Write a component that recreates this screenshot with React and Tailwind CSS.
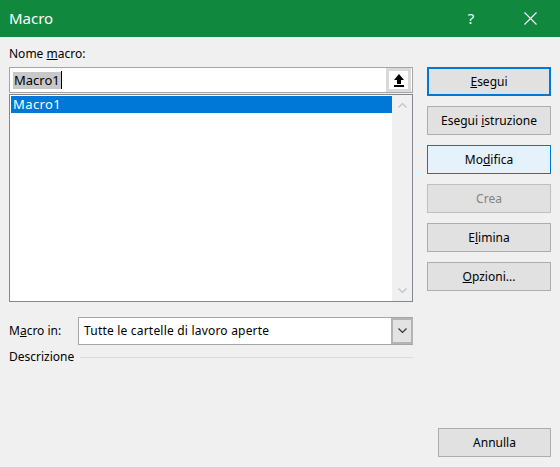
import React from 'react'

const font = { fontFamily: '"Segoe UI", "Noto Sans", "Open Sans", sans-serif' }

function Btn({ children, variant }) {
  let cls = 'h-[29px] w-full flex items-center justify-center text-[12px] border bg-[#e1e1e1] border-[#adadad] text-black'
  if (variant === 'default') cls = 'h-[29px] w-full flex items-center justify-center text-[12px] border-2 bg-[#e1e1e1] border-[#0078d7] text-black'
  if (variant === 'hover') cls = 'h-[29px] w-full flex items-center justify-center text-[12px] border bg-[#e5f1fb] border-[#0078d7] text-black'
  if (variant === 'disabled') cls = 'h-[29px] w-full flex items-center justify-center text-[12px] border bg-[#e1e1e1] border-[#bfbfbf] text-[#838383]'
  return (
    <div className={cls}>
      <span>{children}</span>
    </div>
  )
}

function Chevron({ up, color }) {
  return (
    <svg width="9" height="6" viewBox="0 0 9 6">
      <path d={up ? 'M0.5 5.5 L4.5 1.5 L8.5 5.5' : 'M0.5 0.5 L4.5 4.5 L8.5 0.5'} fill="none" stroke={color} strokeWidth="1.2" />
    </svg>
  )
}

export default function App() {
  return (
    <div className="w-[560px] h-[467px] bg-[#f0f0f0] flex flex-col overflow-hidden" style={font}>
      {/* title bar */}
      <div className="h-[37px] bg-[#10893e] flex items-center pl-[9px] text-white shrink-0">
        <span className="text-[15px]">Macro</span>
        <span className="ml-auto text-[15px] w-[10px] text-center">?</span>
        <div className="ml-[48px] mr-[23px] flex items-center">
          <svg width="13" height="13" viewBox="0 0 13 13">
            <path d="M0.5 0.5 L12.5 12.5 M12.5 0.5 L0.5 12.5" stroke="white" strokeWidth="1.1" />
          </svg>
        </div>
      </div>

      <div className="flex-1 flex px-[9px] gap-[14px] text-[12px] text-black">
        {/* left column */}
        <div className="w-[404px] flex flex-col pt-[9px]">
          <div className="h-[16px] leading-[16px]">Nome <u>m</u>acro:</div>
          <div className="mt-[5px] h-[26px] border border-[#a5a5a5] bg-white flex items-center pl-[3px]">
            <span className="bg-[#c8c8c8] text-[13px] leading-[17px] px-[1px]">Macro1</span>
            <span className="w-[1px] h-[18px] bg-black" />
            <div className="ml-auto mr-[1px] w-[25px] h-[24px] border-[3px] border-[#d9d9d9] bg-white flex items-center justify-center">
              <svg width="10" height="13" viewBox="0 0 10 13">
                <path d="M5 0 L10 6 L7 6 L7 10 L3 10 L3 6 L0 6 Z" fill="black" />
                <rect x="0" y="11" width="10" height="2" fill="black" />
              </svg>
            </div>
          </div>
          <div className="mt-[1px] h-[208px] border border-[#828790] bg-white flex">
            <div className="flex-1 pt-[1px] pl-[1px]">
              <div className="h-[17px] bg-[#0078d7] text-white text-[13px] leading-[17px] pl-[2px] tracking-[0.4px]">Macro1</div>
            </div>
            <div className="w-[20px] bg-[#f0f0f0] flex flex-col items-center justify-between py-[7px]">
              <Chevron up color="#c2c2c2" />
              <Chevron color="#c2c2c2" />
            </div>
          </div>

          <div className="mt-[15px] flex items-center">
            <span className="w-[69px]">M<u>a</u>cro in:</span>
            <div className="flex-1 h-[28px] border border-[#a5a5a5] bg-white flex items-center">
              <span className="pl-[5px] tracking-[0.2px]">Tutte le cartelle di lavoro aperte</span>
              <div className="ml-auto h-full w-[22px] bg-[#e3e3e3] border-2 border-[#b4b4b4] flex items-center justify-center -mr-[1px] -my-[1px]">
                <Chevron color="#333333" />
              </div>
            </div>
          </div>

          <div className="mt-[4px] flex items-center h-[16px]">
            <span>Descrizione</span>
            <div className="flex-1 h-[1px] bg-[#dcdcdc] ml-[6px]" />
          </div>
        </div>

        {/* right column */}
        <div className="w-[124px] flex flex-col pt-[30px] pb-[10px] gap-[10px]">
          <Btn variant="default"><u>E</u>segui</Btn>
          <Btn>Esegui <u>i</u>struzione</Btn>
          <Btn variant="hover">Mo<u>d</u>ifica</Btn>
          <Btn variant="disabled">Crea</Btn>
          <Btn>E<u>l</u>imina</Btn>
          <Btn><u>O</u>pzioni...</Btn>
          <div className="mt-auto self-end w-[113px]">
            <Btn>Annulla</Btn>
          </div>
        </div>
      </div>
    </div>
  )
}
